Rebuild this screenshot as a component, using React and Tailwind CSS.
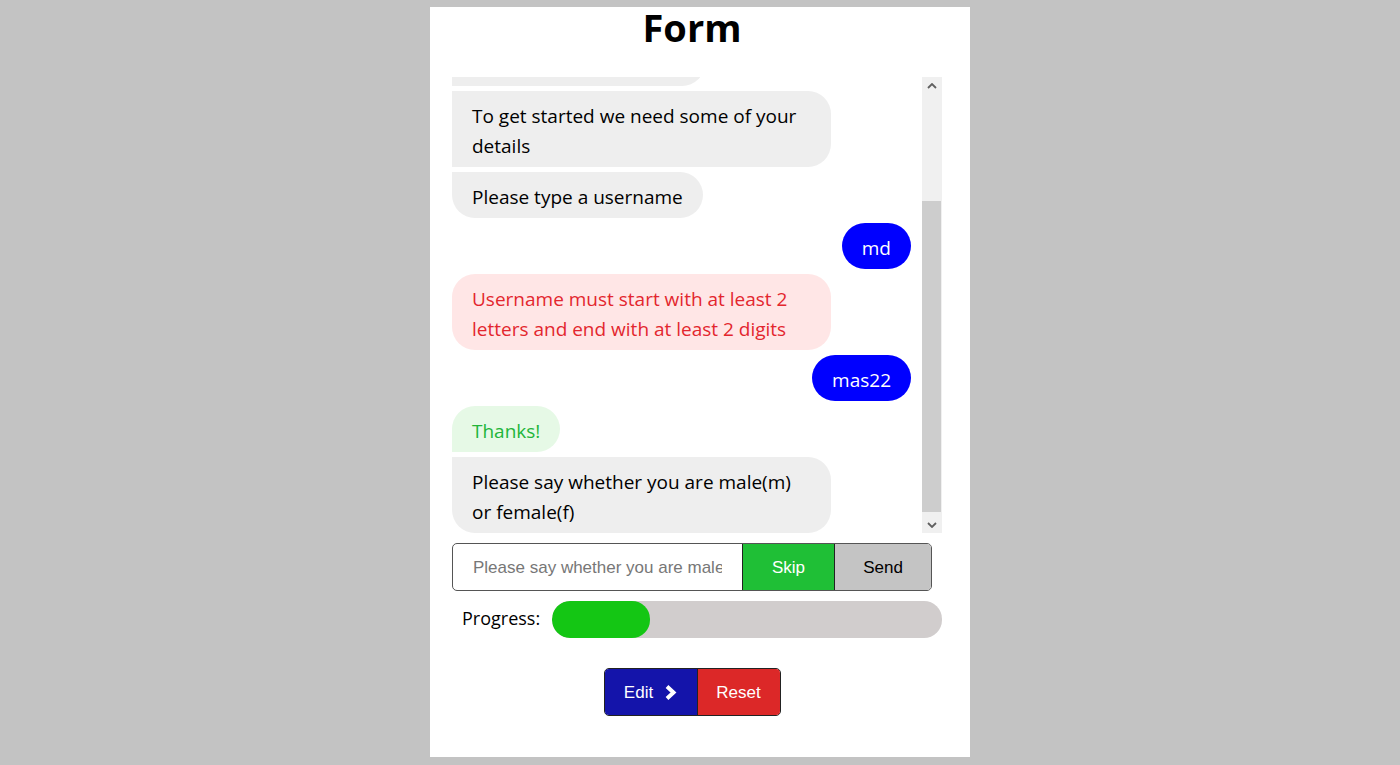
const messages = [
  { from: "bot", text: "Hi, welcome to the form", shape: "rounded-[23px] rounded-bl-none" },
  { from: "bot", text: "To get started we need some of your details", shape: "rounded-r-[23px]" },
  { from: "bot", text: "Please type a username", shape: "rounded-r-[23px] rounded-bl-[23px]" },
  { from: "user", text: "md" },
  { from: "error", text: "Username must start with at least 2 letters and end with at least 2 digits", shape: "rounded-[23px]" },
  { from: "user", text: "mas22" },
  { from: "ok", text: "Thanks!", shape: "rounded-[23px] rounded-bl-none" },
  { from: "bot", text: "Please say whether you are male(m) or female(f)", shape: "rounded-r-[23px] rounded-bl-[23px]" },
];

const Bubble = ({ msg }) => {
  if (msg.from === "user") {
    return (
      <div className="flex justify-end">
        <div className="rounded-[23px] bg-[#0000ff] px-5 pt-[10px] pb-[6px] text-white">{msg.text}</div>
      </div>
    );
  }
  const colors = {
    bot: "bg-[#eeeeee] text-black",
    error: "bg-[#ffe6e6] text-[#e3262e]",
    ok: "bg-[#e6f9e6] text-[#22b53a]",
  };
  return (
    <div className="flex justify-start">
      <div className={`max-w-[379px] px-5 pt-[10px] pb-[6px] ${colors[msg.from]} ${msg.shape}`}>{msg.text}</div>
    </div>
  );
};

const Scrollbar = () => (
  <div className="flex w-5 flex-col bg-[#f0f0f0]">
    <div className="flex h-[17px] items-center justify-center">
      <svg width="10" height="6" viewBox="0 0 10 6">
        <polyline points="1,5 5,1 9,5" fill="none" stroke="#606060" strokeWidth="1.8" />
      </svg>
    </div>
    <div className="flex flex-1 flex-col justify-end pb-[4px]">
      <div className="mr-[1px] h-[311px] bg-[#cdcdcd]" />
    </div>
    <div className="flex h-[17px] items-center justify-center">
      <svg width="10" height="6" viewBox="0 0 10 6">
        <polyline points="1,1 5,5 9,1" fill="none" stroke="#606060" strokeWidth="1.8" />
      </svg>
    </div>
  </div>
);

const App = () => {
  return (
    <div className="flex min-h-screen justify-center bg-[#c3c3c3] py-[7px]">
      <div className="h-[750px] w-[540px] bg-white">
        <div className="ml-[22px] w-[480px]">
          {/* title */}
          <h1 className="h-[70px] text-center text-[38px] font-bold leading-[40px] font-['Open_Sans',sans-serif]">
            Form
          </h1>

          {/* chat */}
          <div className="flex h-[456px] w-[490px] font-['Open_Sans',sans-serif] text-[19px] leading-[30px]">
            <div className="flex flex-1 flex-col justify-end gap-[5px] overflow-hidden pr-[11px]">
              {messages.map((m, i) => (
                <Bubble key={i} msg={m} />
              ))}
            </div>
            <Scrollbar />
          </div>

          {/* input row */}
          <div className="mt-[10px] flex h-12 overflow-hidden rounded-[5px] border border-[#555] font-['Liberation_Sans',sans-serif] text-[17px]">
            <input
              className="min-w-0 flex-1 px-5 pt-[1px] text-black outline-none placeholder:text-[#777]"
              placeholder="Please say whether you are male(m) or female(f)"
            />
            <button className="w-[92px] border-l border-[#222] bg-[#1fbf36] pt-[1px] text-white">Skip</button>
            <button className="w-[97px] border-l border-[#222] bg-[#c4c4c4] pt-[1px] text-black">Send</button>
          </div>

          {/* progress */}
          <div className="mt-[10px] flex w-[490px] items-center font-['Open_Sans',sans-serif] text-[18px]">
            <span className="w-[100px] pb-[3px] pl-[10px]">Progress:</span>
            <div className="h-[37px] flex-1 overflow-hidden rounded-[18px] bg-[#d1cdcd]">
              <div className="h-full w-[98px] rounded-[18px] bg-[#14c614]" />
            </div>
          </div>

          {/* actions */}
          <div className="mt-[30px] flex justify-center">
            <div className="flex h-12 overflow-hidden rounded-[5px] border border-[#222] font-['Liberation_Sans',sans-serif] text-[17px] text-white">
              <button className="flex w-[92px] items-center justify-center gap-[11px] bg-[#1414aa] pt-[1px]">
                Edit
                <svg width="13" height="15" viewBox="0 0 13 15">
                  <polyline points="3,1.5 9.5,7.5 3,13.5" fill="none" stroke="white" strokeWidth="4" strokeLinejoin="miter" />
                </svg>
              </button>
              <button className="w-[83px] border-l border-[#222] bg-[#dc2828] pt-[1px]">Reset</button>
            </div>
          </div>
        </div>
      </div>
    </div>
  );
};

export default App;
